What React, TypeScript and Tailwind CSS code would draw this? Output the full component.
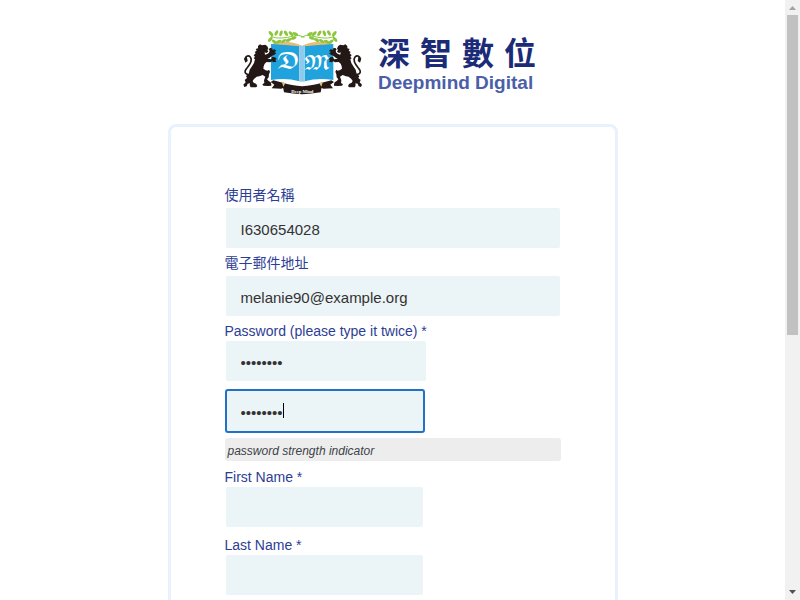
import React from "react";

const leaves: [number, number, number][] = [
  [103, 46, -50], [105, 29, 50], [115, 53, 35], [121, 27, -60], [128, 53, -25], [135, 28, -70],
  [143, 51, -30], [150, 28, 60], [158, 48, -25], [165, 29, 45], [173, 42, -20], [178, 30, 25],
];

function Branch() {
  return (
    <g fill="#8cc63f">
      <path d="M105 36C118 46 150 42 172 36Q188 30 205 40" fill="none" stroke="#8cc63f" strokeWidth="3" />
      {leaves.map(([x, y, r]) => (
        <ellipse key={`${x}-${y}`} cx={x} cy={y} rx="9" ry="4.6" transform={`rotate(${r} ${x} ${y})`} />
      ))}
    </g>
  );
}

function Lion() {
  return (
    <g>
      <path
        fill="#231815"
        d="M66 66L72 61L78 64L88 62L94 67L97 74L94 78L97 83L91 87L86 85L87 92L94 90L99 86L101 80L98 76L103 71L110 74L109 78L116 76L121 81L115 84L121 88L115 92L107 96L100 102L94 104L106 106L109 99L117 100L122 105L118 108L121 113L113 115L108 112L103 115L92 114L86 119L83 127L82 134L89 139L95 140L99 137L102 143L99 151L98 160L93 166L98 171L104 175L106 181L106 185L96 186L82 185L79 181L85 177L84 169L88 158L80 153L70 157L62 158L54 165L50 171L53 176L61 180L64 187L60 190L44 190L41 184L42 178L35 179L32 187L25 189L22 182L29 175L26 168L33 162L30 156L38 150L41 137L48 127L54 117L57 106L53 103L57 98L53 94L59 88L56 84L62 80L59 75L66 73Z"
      />
      <path
        d="M44 151C26 154 23 143 33 132C43 120 50 108 43 99C36 92 27 97 28 106"
        fill="none"
        stroke="#231815"
        strokeWidth="5"
        strokeLinecap="round"
      />
      <path d="M24 104L32 95L35 111L28 116Z" fill="#231815" />
    </g>
  );
}

function RibbonEnd() {
  return (
    <g>
      <path d="M146 178L112 169L104 174L115 182L107 193L136 194L146 190Z" fill="#231815" />
      <path d="M137 173L148 178L142 188Z" fill="#e5bd78" />
    </g>
  );
}

function Crest() {
  return (
    <svg viewBox="0 0 402 228" className="h-[76px] w-[134px] shrink-0" role="img" aria-label="Deep Mind crest">
      <path d="M106 62C122 50 170 50 198 66C226 50 276 50 291 62V69H106Z" fill="#e5bd78" />
      <path d="M105 60Q151 62 190 67V172Q150 160 105 168Z" fill="#20a2dc" />
      <path d="M292 60Q246 62 206 67V172Q247 160 292 168Z" fill="#20a2dc" />
      <path d="M190 65H206V173H190Z" fill="#8fcaec" />
      <Branch />
      <g transform="translate(400 0) scale(-1 1)">
        <Branch />
      </g>
      <g fill="#fff" fontFamily="'DejaVu Math TeX Gyre', 'DejaVu Sans', 'Liberation Serif', serif" textAnchor="middle">
        <text x="156" y="136" fontSize="60">𝕯</text>
        <text x="244" y="136" fontSize="54">𝕸</text>
      </g>
      <Lion />
      <g transform="translate(400 0) scale(-1 1)">
        <Lion />
      </g>
      <path d="M138 175Q198 198 260 175L254 205Q198 216 144 205Z" fill="#231815" />
      <RibbonEnd />
      <g transform="translate(398 0) scale(-1 1)">
        <RibbonEnd />
      </g>
      <text x="199" y="206" fill="#fff" fontFamily="'Liberation Serif', serif" fontSize="14" fontWeight="700" textAnchor="middle">
        Deep Mind
      </text>
    </svg>
  );
}

function Brand() {
  return (
    <a href="#home" className="flex items-center gap-2 pr-[13px]">
      <Crest />
      <span className="flex w-[158px] flex-col pt-1.5">
        <span className="flex justify-between font-['Noto_Sans_CJK_TC',sans-serif] text-[32px] leading-9 font-bold text-[#1c2b78]">
          {["深", "智", "數", "位"].map((c) => (
            <span key={c}>{c}</span>
          ))}
        </span>
        <span className="text-[19px] leading-7 font-bold whitespace-nowrap text-[#4a5fa8]">Deepmind Digital</span>
      </span>
    </a>
  );
}

const fieldStyle =
  "mx-px block h-10 rounded-xs bg-[#ebf4f6] pt-0.5 px-[15px] text-[15px] text-[#333] outline-none";

type FieldProps = { id: string; label: string; width: string; leading?: string; value?: string };

function Field({ id, label, width, leading = "leading-5", value }: FieldProps) {
  return (
    <div className="mb-2">
      <label htmlFor={id} className={`block h-5 text-sm text-[#2c3e94] ${leading}`}>
        {label}
      </label>
      <input id={id} type="text" defaultValue={value} className={`${fieldStyle} ${width}`} />
    </div>
  );
}

function ScrollBar() {
  return (
    <div aria-hidden="true" className="flex w-[15px] shrink-0 flex-col bg-[#f1f1f1]">
      <svg viewBox="0 0 15 15" className="h-[15px]">
        <path d="M4 10L7.5 6L11 10Z" fill="#a3a3a3" />
      </svg>
      <div className="mx-0.5 flex-1">
        <div className="h-[56.2%] bg-[#c1c1c1]" />
      </div>
      <svg viewBox="0 0 15 15" className="h-[15px]">
        <path d="M4 5L7.5 9L11 5Z" fill="#505050" />
      </svg>
    </div>
  );
}

export default function App() {
  return (
    <div className="flex h-screen overflow-hidden bg-white font-['Liberation_Sans','Noto_Sans_CJK_TC',sans-serif]">
      <main className="flex min-w-0 flex-1 flex-col items-center overflow-hidden pt-6">
        <Brand />
        <form className="mt-6 w-full max-w-[450px] shrink-0 rounded-lg border-3 border-[#e9f1fd] px-[54px] pt-[61px] pb-14">
          <Field id="username" label="使用者名稱" width="w-[334px]" leading="leading-[14px]" value="I630654028" />
          <Field id="email" label="電子郵件地址" width="w-[334px]" leading="leading-[14px]" value="melanie90@example.org" />
          <label htmlFor="pass1" className="block h-[17px] text-sm leading-[14px] text-[#2c3e94]">
            Password (please type it twice) *
          </label>
          <input id="pass1" type="password" defaultValue="password" className={`${fieldStyle} w-[200px]`} />
          <div className="relative mt-2 w-[200px]">
            <input
              type="password"
              aria-label="Repeat password"
              defaultValue="password"
              className="block h-11 w-full rounded-[3px] border-2 border-[#2271c8] bg-[#ebf4f6] px-[14px] pt-0.5 text-[15px] text-[#333] outline-none"
            />
            <span className="absolute top-3.5 left-[58px] h-[15px] w-px bg-black" />
          </div>
          <output className="mt-[5px] mb-1.5 block h-[23px] rounded-[3px] bg-[#ededed] px-[3px] text-xs leading-[27px] text-[#3c434a] italic">
            password strength indicator
          </output>
          <Field id="first" label="First Name *" width="w-[197px]" />
          <Field id="last" label="Last Name *" width="w-[197px]" />
        </form>
      </main>
      <ScrollBar />
    </div>
  );
}
